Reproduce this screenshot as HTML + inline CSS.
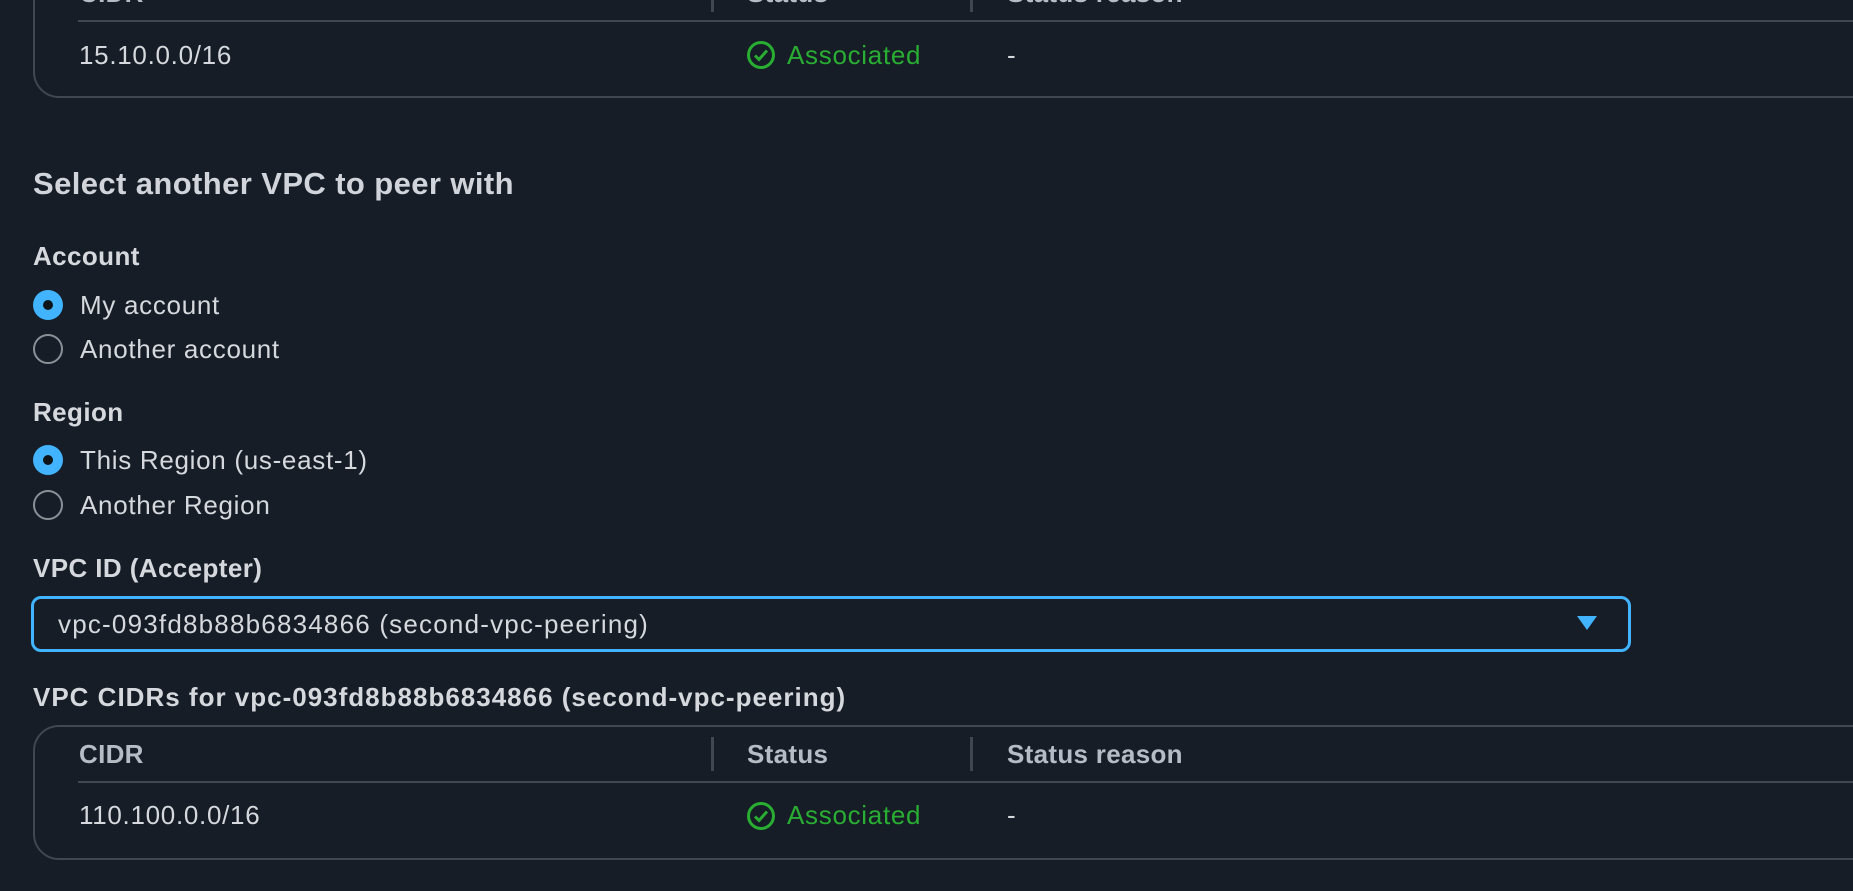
<!DOCTYPE html>
<html><head><meta charset="utf-8"><style>
html,body{margin:0;padding:0;background:#161d26;width:1853px;height:891px;overflow:hidden;font-family:"Liberation Sans",sans-serif;color:#d5d8dd}
.abs{position:absolute;white-space:nowrap}
.box{position:absolute;left:33px;width:1900px;border:2px solid #414750;border-radius:26px;box-sizing:border-box}
.t{font-size:26px;line-height:30px;letter-spacing:0.7px}
.b{font-weight:bold;letter-spacing:0.4px}
.hd{color:#b6bcc4;font-weight:bold;font-size:26px;letter-spacing:0.3px}
.sep{position:absolute;width:3px;background:#414750}
.line{position:absolute;left:78px;right:0;height:2px;background:#414750}
.radio{position:absolute;left:33px;width:30px;height:30px;border-radius:50%;box-sizing:border-box}
.on{background:#42b4ff}
.on::after{content:"";position:absolute;left:10px;top:10px;width:10px;height:10px;border-radius:50%;background:#0f141a}
.off{border:2px solid #8b9097}
.green{color:#29ad32}
</style></head><body>
<div class="box" style="top:-40px;height:138px"></div>
<div class="abs hd" style="left:79px;top:-22px">CIDR</div>
<div class="abs hd" style="left:747px;top:-22px">Status</div>
<div class="abs hd" style="left:1007px;top:-22px">Status reason</div>
<div class="sep" style="left:711px;top:0;height:12px"></div>
<div class="sep" style="left:970px;top:0;height:12px"></div>
<div class="line" style="top:20px"></div>
<div class="abs t" style="left:79px;top:40px">15.10.0.0/16</div>
<svg class="abs" style="left:746px;top:40px" width="30" height="30" viewBox="0 0 30 30"><circle cx="15" cy="15" r="12.5" fill="none" stroke="#29ad32" stroke-width="3"/><path d="M9 15.5l4 4 8-9" fill="none" stroke="#29ad32" stroke-width="3"/></svg>
<div class="abs t green" style="left:787px;top:40px">Associated</div>
<div class="abs t" style="left:1007px;top:40px">-</div>

<div class="abs b" style="left:33px;top:166px;font-size:31px;color:#d1d5db">Select another VPC to peer with</div>
<div class="abs t b" style="left:33px;top:241px">Account</div>
<div class="radio on" style="top:290px"></div>
<div class="abs t" style="left:80px;top:290px">My account</div>
<div class="radio off" style="top:334px"></div>
<div class="abs t" style="left:80px;top:334px">Another account</div>
<div class="abs t b" style="left:33px;top:397px">Region</div>
<div class="radio on" style="top:445px"></div>
<div class="abs t" style="left:80px;top:445px">This Region (us-east-1)</div>
<div class="radio off" style="top:490px"></div>
<div class="abs t" style="left:80px;top:490px">Another Region</div>
<div class="abs t b" style="left:33px;top:553px">VPC ID (Accepter)</div>
<div class="abs" style="left:31px;top:596px;width:1600px;height:56px;border:3px solid #42b4ff;border-radius:10px;box-sizing:border-box"></div>
<div class="abs t" style="left:58px;top:609px;letter-spacing:1.2px">vpc-093fd8b88b6834866 (second-vpc-peering)</div>
<svg class="abs" style="left:1576px;top:615px" width="22" height="16" viewBox="0 0 22 16"><path d="M1 1h20L11 15z" fill="#42b4ff"/></svg>
<div class="abs t b" style="left:33px;top:682px;letter-spacing:1px">VPC CIDRs for vpc-093fd8b88b6834866 (second-vpc-peering)</div>
<div class="box" style="top:725px;height:135px"></div>
<div class="abs hd" style="left:79px;top:739px">CIDR</div>
<div class="abs hd" style="left:747px;top:739px">Status</div>
<div class="abs hd" style="left:1007px;top:739px">Status reason</div>
<div class="sep" style="left:711px;top:737px;height:34px"></div>
<div class="sep" style="left:970px;top:737px;height:34px"></div>
<div class="line" style="top:781px"></div>
<div class="abs t" style="left:79px;top:800px">110.100.0.0/16</div>
<svg class="abs" style="left:746px;top:801px" width="30" height="30" viewBox="0 0 30 30"><circle cx="15" cy="15" r="12.5" fill="none" stroke="#29ad32" stroke-width="3"/><path d="M9 15.5l4 4 8-9" fill="none" stroke="#29ad32" stroke-width="3"/></svg>
<div class="abs t green" style="left:787px;top:800px">Associated</div>
<div class="abs t" style="left:1007px;top:800px">-</div>
</body></html>
